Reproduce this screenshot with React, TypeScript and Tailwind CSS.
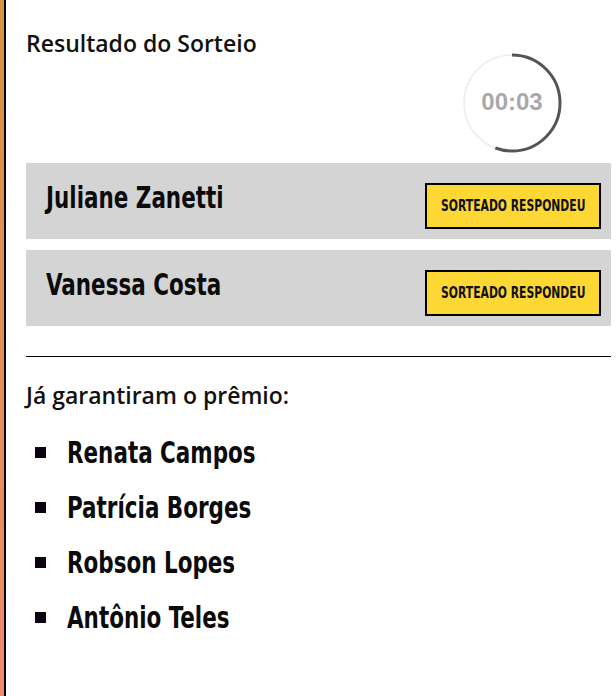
const sorteados = ["Juliane Zanetti", "Vanessa Costa"];
const ganhadores = ["Renata Campos", "Patrícia Borges", "Robson Lopes", "Antônio Teles"];

function Timer() {
  // 3s passados, arco escuro cobre ~200 graus
  const r = 48;
  const c = 2 * Math.PI * r;
  return (
    <div className="relative w-[100px] h-[100px]">
      <svg width="100" height="100" viewBox="0 0 100 100" className="absolute inset-0">
        <circle cx="50" cy="50" r={r} fill="none" stroke="#ececec" strokeWidth="1.5" />
        <circle
          cx="50"
          cy="50"
          r={r}
          fill="none"
          stroke="#555555"
          strokeWidth="3"
          strokeDasharray={`${c * (200 / 360)} ${c}`}
          transform="rotate(-90 50 50)"
        />
      </svg>
      <div className="absolute inset-0 flex items-center justify-center pb-[2px] font-['Liberation_Sans',Arial,sans-serif] text-[24px] font-bold text-[#a9a9a9]">
        00:03
      </div>
    </div>
  );
}

export default function App() {
  return (
    <div className="flex h-[696px] overflow-hidden bg-white">
      <div className="w-1 bg-linear-to-b from-[#d6933f] to-[#ef8a6a]" />
      <div className="w-[2px] bg-black" />
      <main className="flex-1 pl-5 pr-[5px] pt-[32px]">
        <h1 className="font-['Open_Sans',sans-serif] text-[23px] leading-[22px] font-semibold text-[#111]">
          Resultado do Sorteio
        </h1>
        <div className="-mt-px flex justify-end pr-[49px]">
          <Timer />
        </div>
        <div className="mt-[10px] flex flex-col gap-[11px]">
          {sorteados.map((nome) => (
            <div key={nome} className="flex h-[76px] items-start justify-between bg-[#d4d4d4] pl-5 pr-[10px]">
              <span className="mt-[19px] origin-left scale-x-[0.77] whitespace-nowrap font-['DejaVu_Sans_Condensed','DejaVu_Sans',sans-serif] text-[31px] leading-[31px] font-bold text-[#0b0b0b]">
                {nome}
              </span>
              <button className="mt-5 flex h-[46px] w-[176px] items-center justify-center border-2 border-black bg-[#fdd835]">
                <span className="scale-x-[0.8] whitespace-nowrap font-['DejaVu_Sans_Condensed','DejaVu_Sans',sans-serif] text-[15px] font-bold text-[#111]">
                  SORTEADO RESPONDEU
                </span>
              </button>
            </div>
          ))}
        </div>
        <hr className="mt-[30px] border-t border-black" />
        <p className="mt-[24px] font-['Open_Sans',sans-serif] text-[23px] leading-[28px] font-semibold text-[#111]">
          Já garantiram o prêmio:
        </p>
        <ul className="mt-[16px]">
          {ganhadores.map((nome) => (
            <li key={nome} className="flex h-[55px] items-center pl-[9px]">
              <span className="h-[11px] w-[11px] shrink-0 bg-[#0b0410]" />
              <span className="ml-[21px] origin-left scale-x-[0.77] whitespace-nowrap font-['DejaVu_Sans_Condensed','DejaVu_Sans',sans-serif] text-[31px] leading-[31px] font-bold text-[#0b0b0b]">
                {nome}
              </span>
            </li>
          ))}
        </ul>
      </main>
    </div>
  );
}
